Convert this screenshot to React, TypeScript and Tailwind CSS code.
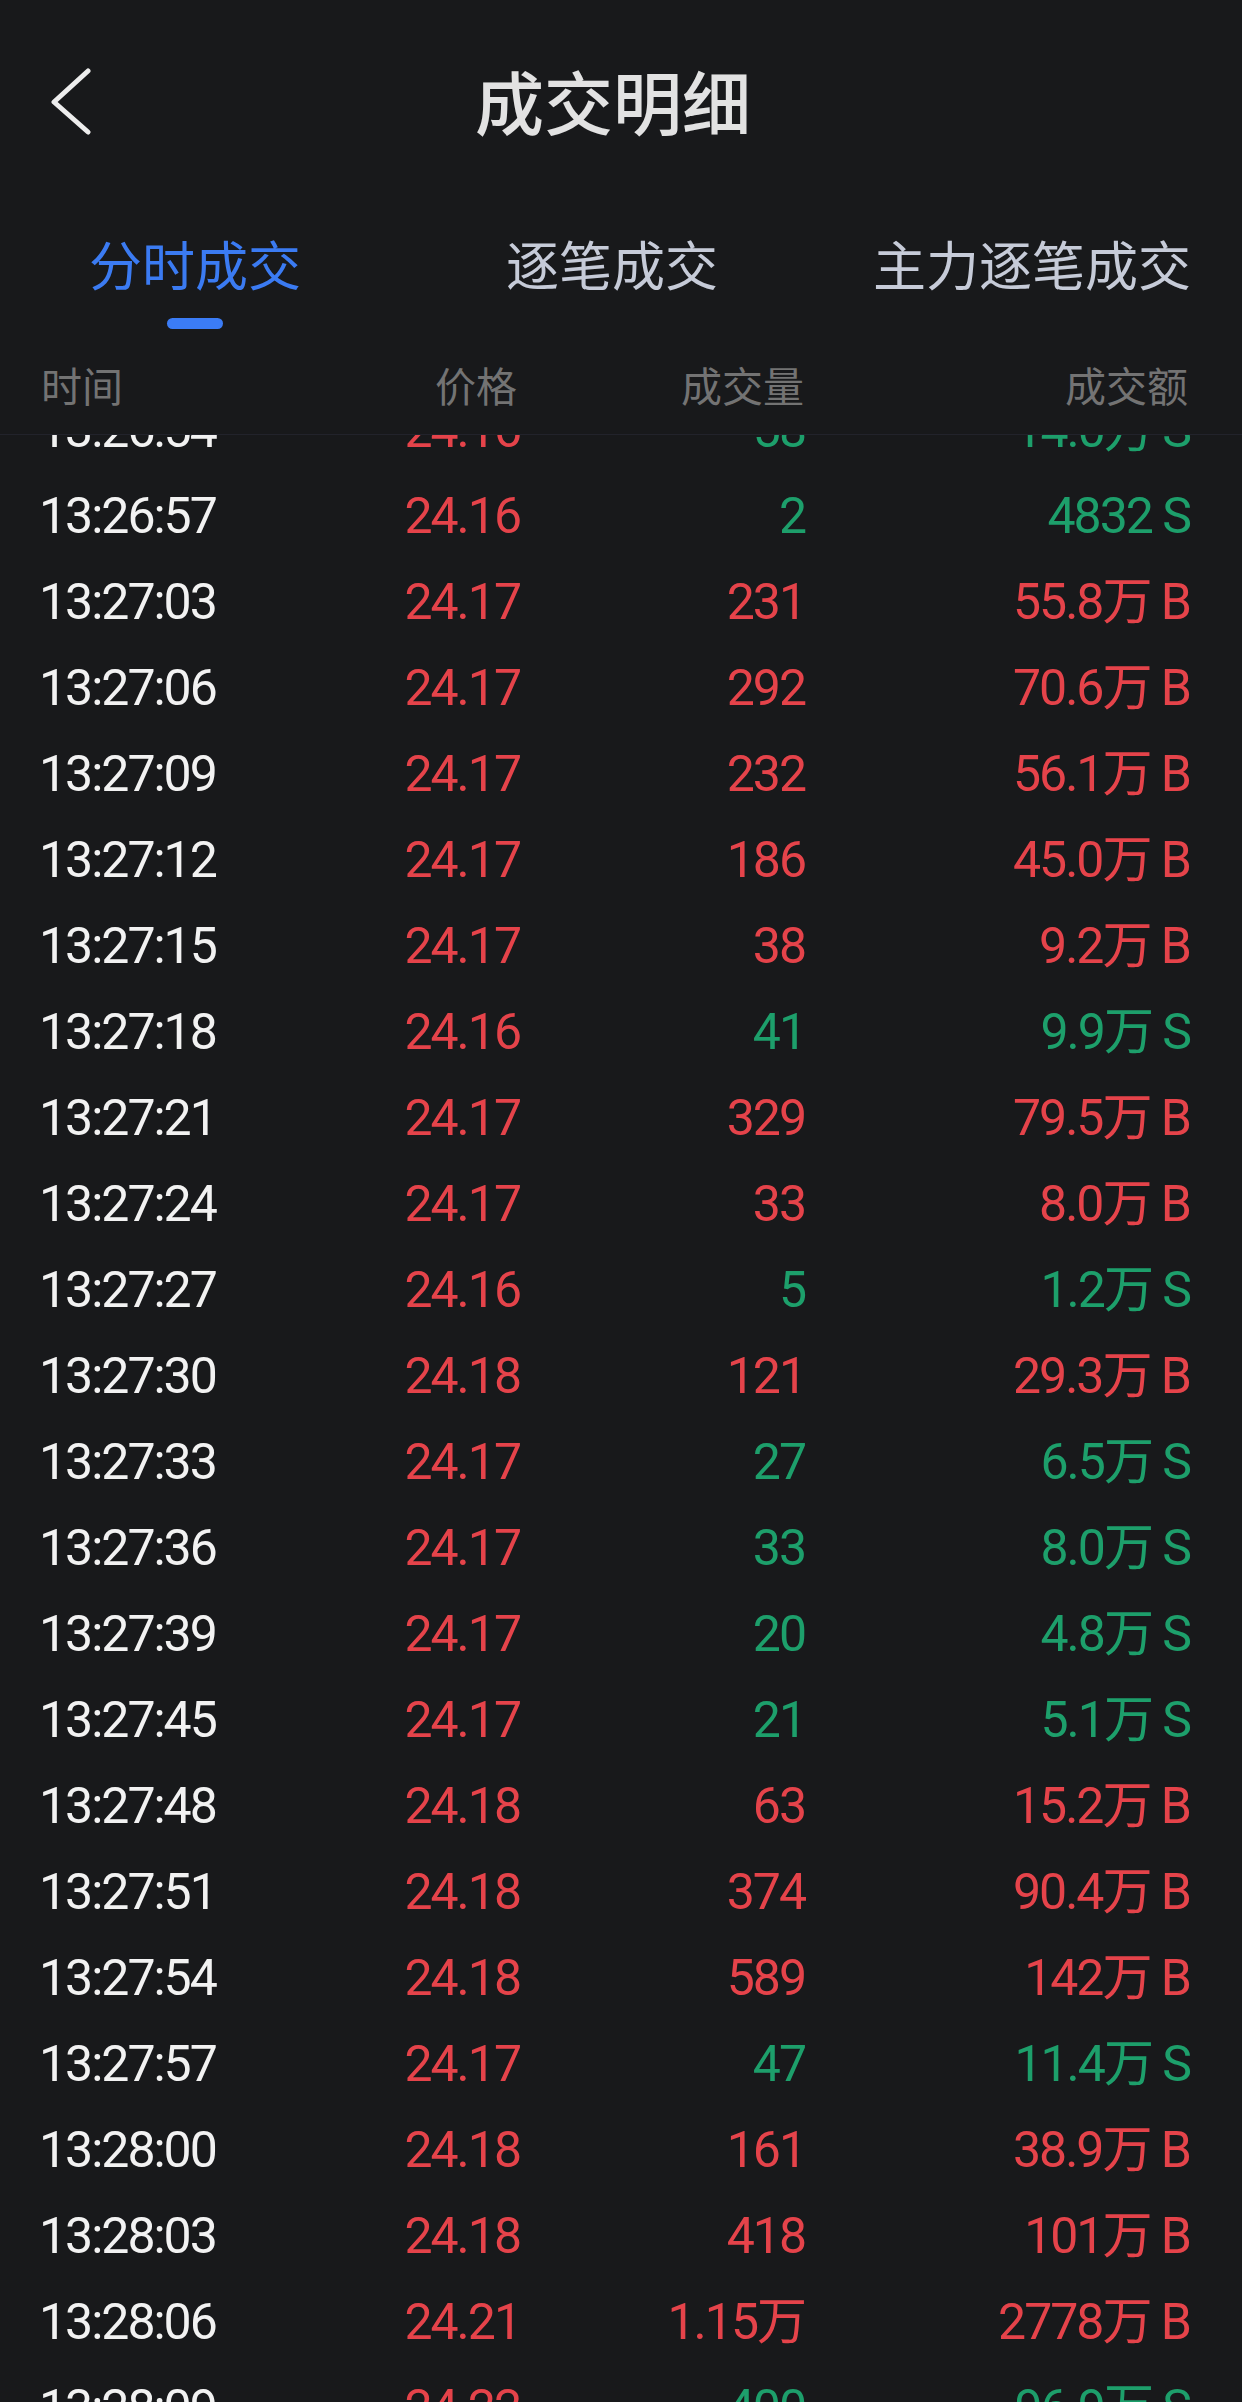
import React from 'react';

type Side = 'B' | 'S';

type Trade = {
  time: string;
  price: string;
  volume: string;
  amount: string;
  side: Side;
};

const trades: Trade[] = [
  { time: '13:26:54', price: '24.16', volume: '58', amount: '14.0万', side: 'S' },
  { time: '13:26:57', price: '24.16', volume: '2', amount: '4832', side: 'S' },
  { time: '13:27:03', price: '24.17', volume: '231', amount: '55.8万', side: 'B' },
  { time: '13:27:06', price: '24.17', volume: '292', amount: '70.6万', side: 'B' },
  { time: '13:27:09', price: '24.17', volume: '232', amount: '56.1万', side: 'B' },
  { time: '13:27:12', price: '24.17', volume: '186', amount: '45.0万', side: 'B' },
  { time: '13:27:15', price: '24.17', volume: '38', amount: '9.2万', side: 'B' },
  { time: '13:27:18', price: '24.16', volume: '41', amount: '9.9万', side: 'S' },
  { time: '13:27:21', price: '24.17', volume: '329', amount: '79.5万', side: 'B' },
  { time: '13:27:24', price: '24.17', volume: '33', amount: '8.0万', side: 'B' },
  { time: '13:27:27', price: '24.16', volume: '5', amount: '1.2万', side: 'S' },
  { time: '13:27:30', price: '24.18', volume: '121', amount: '29.3万', side: 'B' },
  { time: '13:27:33', price: '24.17', volume: '27', amount: '6.5万', side: 'S' },
  { time: '13:27:36', price: '24.17', volume: '33', amount: '8.0万', side: 'S' },
  { time: '13:27:39', price: '24.17', volume: '20', amount: '4.8万', side: 'S' },
  { time: '13:27:45', price: '24.17', volume: '21', amount: '5.1万', side: 'S' },
  { time: '13:27:48', price: '24.18', volume: '63', amount: '15.2万', side: 'B' },
  { time: '13:27:51', price: '24.18', volume: '374', amount: '90.4万', side: 'B' },
  { time: '13:27:54', price: '24.18', volume: '589', amount: '142万', side: 'B' },
  { time: '13:27:57', price: '24.17', volume: '47', amount: '11.4万', side: 'S' },
  { time: '13:28:00', price: '24.18', volume: '161', amount: '38.9万', side: 'B' },
  { time: '13:28:03', price: '24.18', volume: '418', amount: '101万', side: 'B' },
  { time: '13:28:06', price: '24.21', volume: '1.15万', amount: '2778万', side: 'B' },
  { time: '13:28:09', price: '24.22', volume: '400', amount: '96.9万', side: 'S' },
];

const tabs = [
  { label: '分时成交', width: 'w-[390px]', active: true },
  { label: '逐笔成交', width: 'w-[444px]', active: false },
  { label: '主力逐笔成交', width: 'w-[396px]', active: false },
];

const cjk = "font-['Noto_Sans_CJK_SC',sans-serif]";
const num = "font-['Roboto','Noto_Sans_CJK_SC',sans-serif]";

function BackIcon() {
  return (
    <svg width="40" height="70" viewBox="0 0 40 70" fill="none">
      <path d="M37 4 L3 35 L37 65" stroke="#ededed" strokeWidth="5" strokeLinecap="round" strokeLinejoin="round" />
    </svg>
  );
}

function TradeRow({ t }: { t: Trade }) {
  const sideColor = t.side === 'B' ? 'text-[#e5434a]' : 'text-[#1d9f6b]';
  return (
    <div className={`flex h-[86px] items-center pl-[39px] pr-[52px] text-[50px] leading-none tracking-[-2px] ${num}`}>
      <div className="w-[202px] text-[#f2f2f2]">{t.time}</div>
      <div className="w-[279px] text-right text-[#e5434a]">{t.price}</div>
      <div className={`w-[285px] text-right ${sideColor}`}>{t.volume}</div>
      <div className={`flex-1 text-right ${sideColor}`}>
        {t.amount} {t.side}
      </div>
    </div>
  );
}

export default function App() {
  return (
    <div className="h-[2402px] w-[1242px] overflow-hidden bg-[#18191b] flex flex-col">
      {/* nav */}
      <div className="grid h-[200px] shrink-0 grid-cols-[1fr_auto_1fr] items-center">
        <div className="pl-[51px] pt-[4px]">
          <BackIcon />
        </div>
        <h1 className={`mr-[16px] text-[69px] leading-none font-medium text-[#e2e2e2] ${cjk}`}>成交明细</h1>
        <div />
      </div>

      {/* tabs */}
      <div className="flex shrink-0 pt-[33px]">
        {tabs.map((tab) => (
          <div key={tab.label} className={`${tab.width} flex flex-col items-center`}>
            <span
              className={`text-[53px] leading-[60px] ${cjk} ${tab.active ? 'text-[#3b7bf2]' : 'text-[#c6cbd8]'}`}
            >
              {tab.label}
            </span>
            <span className={`mt-[25px] h-[11px] w-[56px] rounded-full ${tab.active ? 'bg-[#3b7cf6]' : 'bg-transparent'}`} />
          </div>
        ))}
      </div>

      {/* column header */}
      <div
        className={`flex shrink-0 items-center border-b border-[#22232b] pt-[30px] pb-[25px] pl-[41px] pr-[54px] text-[41px] leading-[50px] text-[#737373] ${cjk}`}
      >
        <div className="w-[200px]">时间</div>
        <div className="w-[276px] text-right">价格</div>
        <div className="w-[287px] text-right">成交量</div>
        <div className="flex-1 text-right">成交额</div>
      </div>

      {/* list */}
      <div className="flex-1 overflow-hidden">
        <div className="-mt-[48px]">
          {trades.map((t) => (
            <TradeRow key={t.time} t={t} />
          ))}
        </div>
      </div>
    </div>
  );
}
